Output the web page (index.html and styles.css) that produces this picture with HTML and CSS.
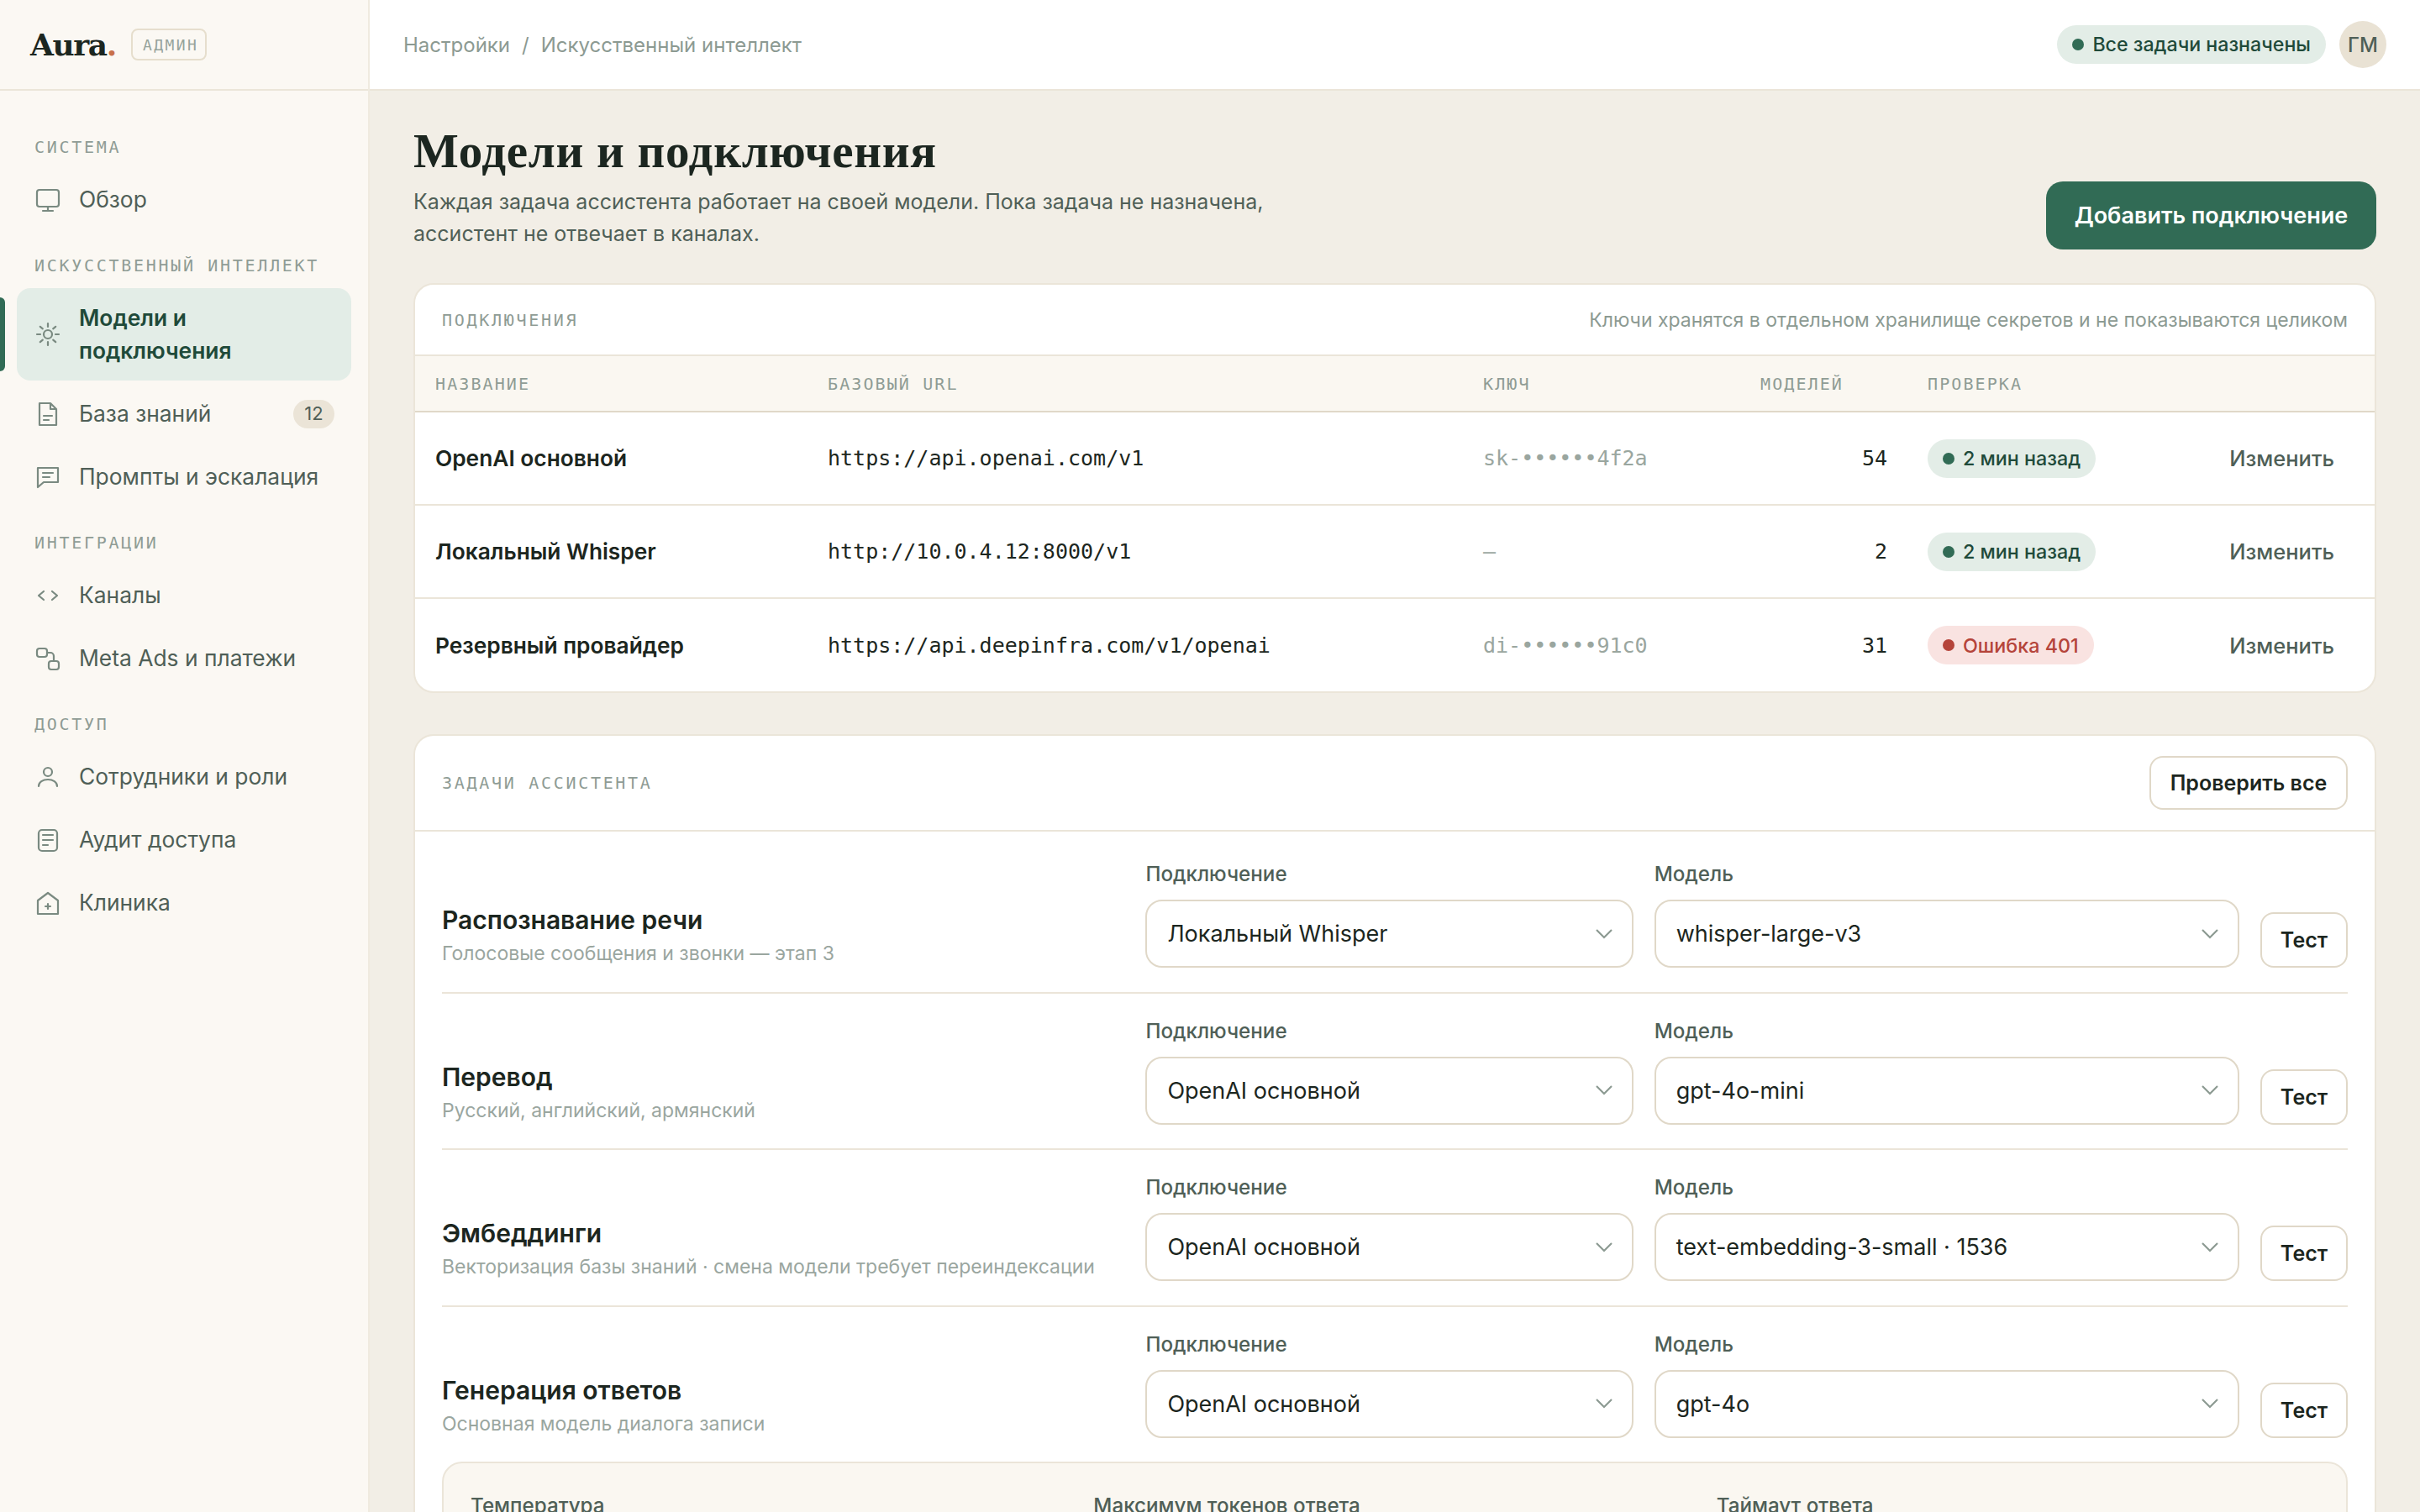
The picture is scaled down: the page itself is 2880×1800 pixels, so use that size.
FILE: index.html
```html
<!DOCTYPE html>
<html lang="ru">
<head>
<meta charset="utf-8">
<title>Aura — Модели и подключения</title>
<link rel="stylesheet" href="styles.css">
</head>
<body>
<div class="app">
  <aside class="sidebar">
    <div class="brand">
      <span class="logo">Aura<span class="logo-dot">.</span></span>
      <span class="admin-tag">АДМИН</span>
    </div>
    <nav class="nav">
      <div class="nav-label">СИСТЕМА</div>
      <a class="nav-item"><svg class="icon" viewBox="0 0 32 32"><rect x="3" y="4" width="26" height="20" rx="3"/><path d="M16 24v5M10 29h12"/></svg><span class="nav-text">Обзор</span></a>
      <div class="nav-label">ИСКУССТВЕННЫЙ ИНТЕЛЛЕКТ</div>
      <a class="nav-item active"><svg class="icon" viewBox="0 0 32 32"><circle cx="16" cy="16" r="5"/><path d="M16 3v4M16 25v4M3 16h4M25 16h4M6.8 6.8l3 2.6M22.2 22.6l3 2.6M6.8 25.2l3-2.6M22.2 9.4l3-2.6"/></svg><span class="nav-text">Модели и подключения</span></a>
      <a class="nav-item"><svg class="icon" viewBox="0 0 32 32"><path d="M6 3h13l7 7v19H6zM19 3v7h7M11 18h10M11 23h6"/></svg><span class="nav-text">База знаний</span><span class="count">12</span></a>
      <a class="nav-item"><svg class="icon" viewBox="0 0 32 32"><path d="M4 5h24v17H11l-7 6zM10 11h12M10 16h8"/></svg><span class="nav-text">Промпты и эскалация</span></a>
      <div class="nav-label">ИНТЕГРАЦИИ</div>
      <a class="nav-item"><svg class="icon" viewBox="0 0 32 32"><path d="M11 11l-6 5 6 5M21 11l6 5-6 5"/></svg><span class="nav-text">Каналы</span></a>
      <a class="nav-item"><svg class="icon" viewBox="0 0 32 32"><rect x="3" y="4" width="12" height="10" rx="3"/><rect x="17" y="19" width="12" height="10" rx="3"/><path d="M15 9h4a4 4 0 0 1 4 4v6"/></svg><span class="nav-text">Meta Ads и платежи</span></a>
      <div class="nav-label">ДОСТУП</div>
      <a class="nav-item"><svg class="icon" viewBox="0 0 32 32"><circle cx="16" cy="10" r="5"/><path d="M5 27c0-5 5-8 11-8s11 3 11 8"/></svg><span class="nav-text">Сотрудники и роли</span></a>
      <a class="nav-item"><svg class="icon" viewBox="0 0 32 32"><rect x="5" y="4" width="22" height="25" rx="4"/><path d="M10 10h12M10 16h12M10 22h6"/></svg><span class="nav-text">Аудит доступа</span></a>
      <a class="nav-item"><svg class="icon" viewBox="0 0 32 32"><path d="M4 13L16 4l12 9v16H4zM16 17v6M13 20h6"/></svg><span class="nav-text">Клиника</span></a>
    </nav>
  </aside>

  <div class="workspace">
    <header class="topbar">
      <div class="crumbs"><span>Настройки</span><span class="crumb-sep">/</span><span>Искусственный интеллект</span></div>
      <div class="top-right">
        <span class="pill pill-ok top-pill"><i class="dot"></i>Все задачи назначены</span>
        <span class="avatar">ГМ</span>
      </div>
    </header>

    <main class="main">
      <div class="page-head">
        <div>
          <h1 class="title">Модели и подключения</h1>
          <p class="desc">Каждая задача ассистента работает на своей модели. Пока задача не назначена, ассистент не отвечает в каналах.</p>
        </div>
        <button class="btn-primary">Добавить подключение</button>
      </div>

      <section class="card">
        <div class="card-head conn-head">
          <span class="eyebrow">ПОДКЛЮЧЕНИЯ</span>
          <span class="head-note">Ключи хранятся в отдельном хранилище секретов и не показываются целиком</span>
        </div>
        <table class="table">
          <colgroup><col class="c-name"><col class="c-url"><col class="c-key"><col class="c-num"><col class="c-check"><col></colgroup>
          <thead>
            <tr><th>НАЗВАНИЕ</th><th>БАЗОВЫЙ URL</th><th>КЛЮЧ</th><th>МОДЕЛЕЙ</th><th>ПРОВЕРКА</th><th></th></tr>
          </thead>
          <tbody>
            <tr><td class="name">OpenAI основной</td><td class="mono">https://api.openai.com/v1</td><td class="mono key">sk-••••••4f2a</td><td class="mono num">54</td><td><span class="pill pill-ok"><i class="dot"></i>2 мин назад</span></td><td class="act">Изменить</td></tr>
            <tr><td class="name">Локальный Whisper</td><td class="mono">http://10.0.4.12:8000/v1</td><td class="mono key">—</td><td class="mono num">2</td><td><span class="pill pill-ok"><i class="dot"></i>2 мин назад</span></td><td class="act">Изменить</td></tr>
            <tr><td class="name">Резервный провайдер</td><td class="mono">https://api.deepinfra.com/v1/openai</td><td class="mono key">di-••••••91c0</td><td class="mono num">31</td><td><span class="pill pill-err"><i class="dot"></i>Ошибка 401</span></td><td class="act">Изменить</td></tr>
          </tbody>
        </table>
      </section>

      <section class="card tasks">
        <div class="card-head task-head">
          <span class="eyebrow">ЗАДАЧИ АССИСТЕНТА</span>
          <button class="btn-outline">Проверить все</button>
        </div>
        <div class="task-list">
          <div class="task">
            <div class="task-info"><div class="task-title">Распознавание речи</div><div class="task-sub">Голосовые сообщения и звонки — этап 3</div></div>
            <div class="field"><div class="field-label">Подключение</div><div class="select"><span>Локальный Whisper</span><svg class="chev" viewBox="0 0 20 12"><path d="M1 1l9 9 9-9"/></svg></div></div>
            <div class="field"><div class="field-label">Модель</div><div class="select"><span>whisper-large-v3</span><svg class="chev" viewBox="0 0 20 12"><path d="M1 1l9 9 9-9"/></svg></div></div>
            <button class="btn-test">Тест</button>
          </div>
          <div class="task">
            <div class="task-info"><div class="task-title">Перевод</div><div class="task-sub">Русский, английский, армянский</div></div>
            <div class="field"><div class="field-label">Подключение</div><div class="select"><span>OpenAI основной</span><svg class="chev" viewBox="0 0 20 12"><path d="M1 1l9 9 9-9"/></svg></div></div>
            <div class="field"><div class="field-label">Модель</div><div class="select"><span>gpt-4o-mini</span><svg class="chev" viewBox="0 0 20 12"><path d="M1 1l9 9 9-9"/></svg></div></div>
            <button class="btn-test">Тест</button>
          </div>
          <div class="task">
            <div class="task-info"><div class="task-title">Эмбеддинги</div><div class="task-sub">Векторизация базы знаний · смена модели требует переиндексации</div></div>
            <div class="field"><div class="field-label">Подключение</div><div class="select"><span>OpenAI основной</span><svg class="chev" viewBox="0 0 20 12"><path d="M1 1l9 9 9-9"/></svg></div></div>
            <div class="field"><div class="field-label">Модель</div><div class="select"><span>text-embedding-3-small · 1536</span><svg class="chev" viewBox="0 0 20 12"><path d="M1 1l9 9 9-9"/></svg></div></div>
            <button class="btn-test">Тест</button>
          </div>
          <div class="task last">
            <div class="task-info"><div class="task-title">Генерация ответов</div><div class="task-sub">Основная модель диалога записи</div></div>
            <div class="field"><div class="field-label">Подключение</div><div class="select"><span>OpenAI основной</span><svg class="chev" viewBox="0 0 20 12"><path d="M1 1l9 9 9-9"/></svg></div></div>
            <div class="field"><div class="field-label">Модель</div><div class="select"><span>gpt-4o</span><svg class="chev" viewBox="0 0 20 12"><path d="M1 1l9 9 9-9"/></svg></div></div>
            <button class="btn-test">Тест</button>
          </div>
          <div class="params">
            <div class="field-label">Температура</div>
            <div class="field-label">Максимум токенов ответа</div>
            <div class="field-label">Таймаут ответа</div>
          </div>
        </div>
      </section>
    </main>
  </div>
</div>
</body>
</html>
```
FILE: styles.css
```css
* { box-sizing: border-box; }
html, body { margin: 0; height: 100%; overflow: hidden; }
body { font-family: Inter, "Noto Sans", sans-serif; color: #1c2620; background: #f2eee6; }
.app { display: grid; grid-template-columns: 440px 1fr; height: 1800px; overflow: hidden; }

/* Sidebar */
.sidebar { background: #fbf8f3; border-right: 2px solid #efeadf; position: relative; }
.brand { height: 108px; border-bottom: 2px solid #ebe5d9; display: flex; align-items: center; padding-left: 36px; gap: 18px; }
.logo { font-family: "DejaVu Serif", serif; font-weight: 700; font-size: 36px; letter-spacing: -1.4px; color: #1c2620; line-height: 1; }
.logo-dot { color: #c8704a; }
.admin-tag { font-family: "DejaVu Sans Mono", monospace; font-size: 18px; letter-spacing: 2.4px; color: #96a39b; border: 2px solid #e6decd; border-radius: 8px; height: 38px; padding: 0 8px 0 12px; display: flex; align-items: center; }
.nav { display: flex; flex-direction: column; padding: 28px 20px 0 20px; }
.nav-label { font-family: "DejaVu Sans Mono", monospace; font-size: 20px; letter-spacing: 2.7px; line-height: 24px; color: #8f9c95; padding-left: 21px; margin: 27px 0 15px; white-space: nowrap; }
.nav-item { display: flex; align-items: center; gap: 21px; padding: 16px 20px 16px 21px; margin-bottom: 4px; font-size: 26.4px; line-height: 39px; color: #4f5f57; border-radius: 16px; position: relative; }
.nav-text { flex: 1; }
.nav-item.active { background: #e3ede7; color: #1f4a3a; font-weight: 600; }
.nav-item.active::before { content: ""; position: absolute; left: -20px; top: 11px; bottom: 11px; width: 6px; background: #316b55; border-radius: 0 6px 6px 0; }
.icon { width: 32px; height: 32px; flex: none; fill: none; stroke: #7a8a81; stroke-width: 2.2; stroke-linejoin: round; stroke-linecap: round; }
.count { font-size: 22px; background: #ebe4d7; color: #4f5f57; border-radius: 17px; height: 34px; width: 49px; display: flex; align-items: center; justify-content: center; }

/* Topbar */
.workspace { min-width: 0; display: flex; flex-direction: column; }
.topbar { height: 108px; flex: none; background: #fff; border-bottom: 2px solid #ebe5d9; display: flex; align-items: center; justify-content: space-between; padding: 0 40px 0 40px; }
.crumbs { font-size: 24px; color: #8c9a92; display: flex; gap: 14px; }
.top-right { display: flex; align-items: center; gap: 16px; }
.avatar { width: 56px; height: 56px; border-radius: 50%; background: #e9e2d4; color: #4f5f57; font-size: 24px; font-weight: 500; display: flex; align-items: center; justify-content: center; }

/* Pills */
.pill { display: inline-flex; align-items: center; gap: 10px; height: 46px; border-radius: 23px; padding: 0 18px; font-size: 23.3px; font-weight: 500; white-space: nowrap; }
.pill-ok { background: #e3ede7; color: #1f4a3a; }
.pill-err { background: #f9e3e1; color: #b5443a; }
.dot { width: 14px; height: 14px; border-radius: 50%; background: currentColor; flex: none; }
.pill-ok .dot { background: #316b55; }
.top-pill { padding: 0 18px; gap: 10px; font-size: 23.2px; }

/* Main */
.main { flex: 1; padding: 42px 52px 0; min-height: 0; overflow: hidden; }
.page-head { display: flex; justify-content: space-between; align-items: flex-end; margin-bottom: 40px; }
.title { font-family: "Liberation Serif", serif; font-weight: 700; font-size: 57px; line-height: 60px; letter-spacing: 0.7px; margin: 0 0 11px; color: #1c2620; }
.desc { margin: 0; max-width: 1040px; font-size: 25px; line-height: 38px; color: #4f5f57; }
.btn-primary { border: 0; background: #316b55; color: #fff; font: 600 27px Inter, sans-serif; height: 81px; width: 393px; border-radius: 20px; }

.card { background: #fff; border: 2px solid #ebe5d9; border-radius: 24px; overflow: hidden; }
.card-head { display: flex; align-items: center; justify-content: space-between; padding: 0 32px; }
.conn-head { height: 83px; }
.eyebrow { font-family: "DejaVu Sans Mono", monospace; font-size: 20px; letter-spacing: 2.7px; color: #8f9c95; white-space: nowrap; }
.head-note { font-size: 23px; color: #8c9a92; }

/* Table */
.table { width: 100%; border-collapse: collapse; table-layout: fixed; }
.c-name { width: 467px; }
.c-url { width: 780px; }
.c-key { width: 330px; }
.c-num { width: 199px; }
.c-check { width: 270px; }
.table th { background: #faf7f1; border-top: 2px solid #ebe5d9; border-bottom: 2px solid #e0d8c8; height: 67px; padding: 0 24px; text-align: left; font: 400 20px "DejaVu Sans Mono", monospace; letter-spacing: 2.1px; color: #8f9c95; white-space: nowrap; }
.table td { height: 111px; padding: 0 24px; border-bottom: 2px solid #ebe5d9; font-size: 26.3px; }
.table tr:last-child td { border-bottom: 0; }
.name { font-weight: 600; color: #1c2620; white-space: nowrap; }
.table .mono { font: 400 25px "DejaVu Sans Mono", monospace; color: #1c2620; white-space: nowrap; }
.table .key { color: #9aa69f; }
.table .num { text-align: right; }
.table .act { text-align: right; padding-right: 48px; font-weight: 500; color: #4f5f57; font-size: 25.5px; white-space: nowrap; }

/* Tasks */
.tasks { margin-top: 49px; border-bottom: 0; border-radius: 24px 24px 0 0; }
.task-head { height: 114px; border-bottom: 2px solid #ebe5d9; }
.btn-outline { background: #fff; border: 2px solid #e0d8c8; border-radius: 16px; height: 64px; width: 236px; font: 600 25px Inter, sans-serif; color: #1c2620; }
.task-list { padding: 6px 32px 0; }
.task { display: grid; grid-template-columns: 1.4fr 1fr 1.2fr 104px; column-gap: 25px; align-items: end; padding: 28px 0 28.5px; border-bottom: 2px solid #ebe5d9; }
.task.last { border-bottom: 0; padding-bottom: 28px; }
.task-title { font-size: 30px; font-weight: 600; line-height: 38px; color: #1c2620; }
.task-sub { font-size: 23px; line-height: 34px; color: #9aa69f; margin-top: 4px; }
.field-label { font-size: 24.2px; font-weight: 500; line-height: 34px; color: #4f5f57; white-space: nowrap; }
.select { margin-top: 13px; height: 81px; border: 2px solid #e0d8c8; border-radius: 20px; display: flex; align-items: center; justify-content: space-between; padding: 0 23px 0 24px; font-size: 27px; color: #1c2620; background: #fff; }
.chev { width: 20px; height: 12px; fill: none; stroke: #8c9a92; stroke-width: 2.2; }
.btn-test { height: 66px; background: #fff; border: 2px solid #e0d8c8; border-radius: 16px; font: 600 25px Inter, sans-serif; color: #1c2620; padding: 0; }
.params { display: grid; grid-template-columns: repeat(3, 1fr); column-gap: 24px; background: #faf7f1; border: 2px solid #ebe5d9; border-radius: 24px; padding: 34px 32px 60px; }
```
